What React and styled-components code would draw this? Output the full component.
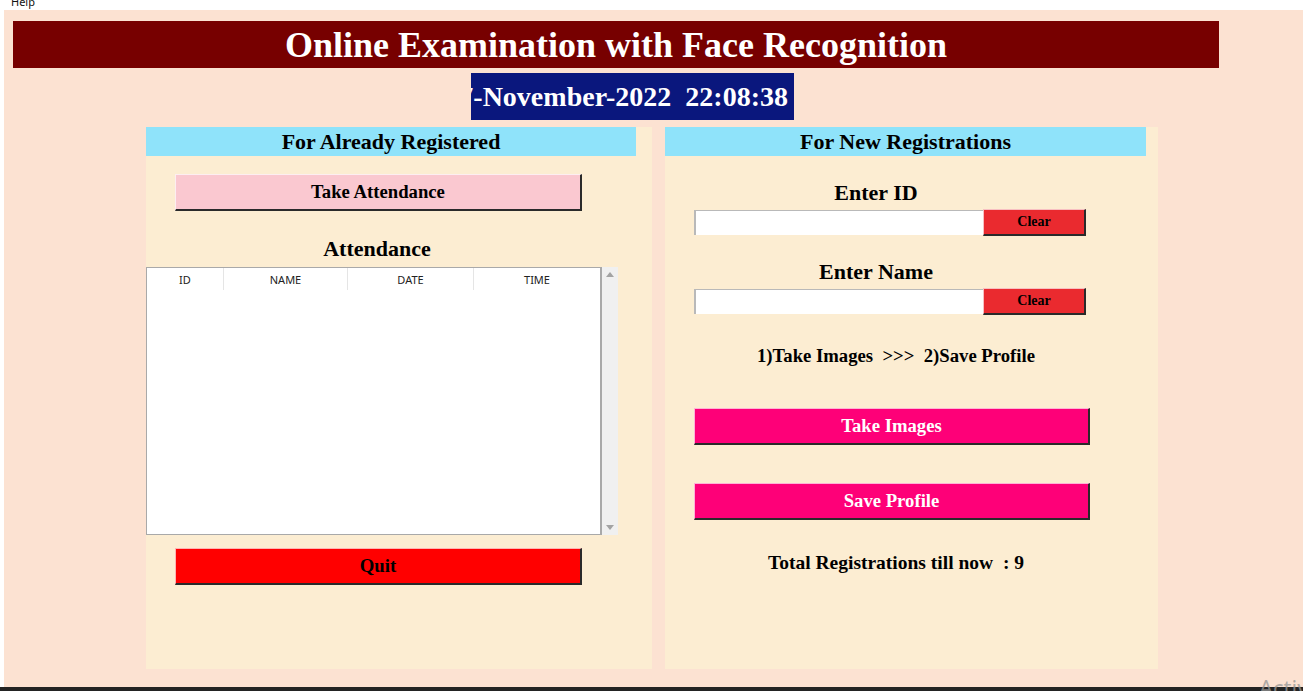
import React from "react";
import styled, { createGlobalStyle } from "styled-components";

const Global = createGlobalStyle`
  html, body { margin: 0; padding: 0; }
  body { background: #ffffff; width: 1303px; height: 691px; overflow: hidden; }
  #root { width: 1303px; height: 691px; }
`;

const serif = `"Liberation Serif", "Times New Roman", serif`;
const sans = `"Noto Sans", "Open Sans", sans-serif`;

const Screen = styled.div`
  position: relative;
  width: 1303px;
  height: 691px;
  display: flex;
  flex-direction: column;
  overflow: hidden;
`;

const MenuBar = styled.div`
  height: 10px;
  background: #ffffff;
  overflow: hidden;
  display: flex;
  padding-left: 11px;
`;

const MenuItem = styled.span`
  font-family: ${sans};
  font-size: 11px;
  line-height: 11px;
  margin-top: -4px;
  color: #111;
`;

const Window = styled.div`
  height: 677px;
  margin-left: 4px;
  background: #fce2d2;
  display: flex;
  flex-direction: column;
`;

const BottomLine = styled.div`
  height: 4px;
  background: #232323;
`;

const TitleBar = styled.div`
  margin: 11px 0 0 9px;
  width: 1206px;
  height: 47px;
  background: #770000;
  color: #ffffff;
  font-family: ${serif};
  font-weight: bold;
  font-size: 36px;
  display: flex;
  align-items: center;
  justify-content: center;
`;

const DateBox = styled.div`
  margin: 5px 0 0 467px;
  width: 323px;
  height: 47px;
  background: #0a177d;
  color: #ffffff;
  font-family: ${serif};
  font-weight: bold;
  font-size: 28px;
  display: flex;
  align-items: center;
  justify-content: flex-end;
  padding-right: 6px;
  box-sizing: border-box;
  overflow: hidden;
  white-space: pre;
`;

const Panels = styled.div`
  display: flex;
  gap: 13px;
  margin-top: 7px;
  padding-left: 142px;
`;

const Panel = styled.div`
  width: ${(p) => p.$w}px;
  height: 542px;
  background: #fcedd2;
  display: flex;
  flex-direction: column;
`;

const PanelHeader = styled.div`
  width: ${(p) => p.$w}px;
  height: 29px;
  background: #8fe3fa;
  font-family: ${serif};
  font-weight: bold;
  font-size: 22px;
  color: #000;
  display: flex;
  align-items: center;
  justify-content: center;
`;

const RaisedButton = styled.button`
  box-sizing: border-box;
  width: ${(p) => p.$w}px;
  height: ${(p) => p.$h || 37}px;
  margin: ${(p) => p.$mt}px 0 0 ${(p) => (p.$ml === undefined ? 29 : p.$ml)}px;
  padding: 0;
  background: ${(p) => p.$bg};
  color: ${(p) => p.$fg || "#000"};
  font-family: ${serif};
  font-weight: bold;
  font-size: ${(p) => p.$fs || 18.7}px;
  border-style: solid;
  border-width: 1px 2px 2px 1px;
  border-color: rgba(255,255,255,0.7) #2a2a2a #2a2a2a rgba(255,255,255,0.7);
  display: flex;
  align-items: center;
  justify-content: center;
  cursor: pointer;
`;

const SectionLabel = styled.div`
  width: ${(p) => p.$w}px;
  margin-top: ${(p) => p.$mt}px;
  text-align: center;
  font-family: ${serif};
  font-weight: bold;
  font-size: ${(p) => p.$fs || 22}px;
  line-height: 24px;
  color: #000;
  white-space: pre;
`;

const TableArea = styled.div`
  display: flex;
  margin-top: 6px;
  height: 268px;
`;

const Table = styled.div`
  box-sizing: border-box;
  width: 456px;
  height: 268px;
  background: #ffffff;
  border: 1px solid #a9a9a9;
  border-right-width: 2px;
`;

const HeaderRow = styled.div`
  display: grid;
  grid-template-columns: 77px 124px 126px 1fr;
  height: 22px;
`;

const HeaderCell = styled.div`
  font-family: ${sans};
  font-size: 11px;
  color: #222;
  display: flex;
  align-items: center;
  justify-content: center;
  border-right: 1px solid #e5e5e5;
  &:last-child { border-right: none; }
`;

const Scrollbar = styled.div`
  width: 16px;
  height: 268px;
  background: #f0f0f0;
  display: flex;
  flex-direction: column;
  justify-content: space-between;
  align-items: center;
  padding: 5px 0;
  box-sizing: border-box;
`;

const FieldRow = styled.div`
  display: flex;
  align-items: center;
  margin: ${(p) => p.$mt}px 0 0 29px;
  height: 27px;
`;

const TextInput = styled.input`
  box-sizing: border-box;
  width: 289px;
  height: 25px;
  border: none;
  border-top: 1px solid #b9b9b9;
  border-left: 2px solid #b9b9b9;
  background: #ffffff;
  outline: none;
  padding: 0 4px;
`;

const Watermark = styled.div`
  position: absolute;
  left: 1259px;
  top: 674px;
  font-family: ${sans};
  font-size: 22px;
  color: rgba(150,150,150,0.75);
  line-height: 26px;
`;

const Arrow = ({ up }) => (
  <svg width="8" height="5" viewBox="0 0 8 5">
    <polygon points={up ? "0,5 8,5 4,0" : "0,0 8,0 4,5"} fill="#a3a3a3" />
  </svg>
);

export default function App() {
  return (
    <Screen>
      <Global />
      <MenuBar>
        <MenuItem>Help</MenuItem>
      </MenuBar>
      <Window>
        <TitleBar>Online Examination with Face Recognition</TitleBar>
        <DateBox>{"17-November-2022  22:08:38"}</DateBox>
        <Panels>
          <Panel $w={506}>
            <PanelHeader $w={490}>For Already Registered</PanelHeader>
            <RaisedButton $w={407} $mt={18} $bg="#fac8d0">Take Attendance</RaisedButton>
            <SectionLabel $w={462} $mt={26}>Attendance</SectionLabel>
            <TableArea>
              <Table>
                <HeaderRow>
                  <HeaderCell>ID</HeaderCell>
                  <HeaderCell>NAME</HeaderCell>
                  <HeaderCell>DATE</HeaderCell>
                  <HeaderCell>TIME</HeaderCell>
                </HeaderRow>
              </Table>
              <Scrollbar>
                <Arrow up />
                <Arrow />
              </Scrollbar>
            </TableArea>
            <RaisedButton $w={407} $mt={13} $bg="#ff0000">Quit</RaisedButton>
          </Panel>
          <Panel $w={493}>
            <PanelHeader $w={481}>For New Registrations</PanelHeader>
            <SectionLabel $w={422} $mt={25}>Enter ID</SectionLabel>
            <FieldRow $mt={4}>
              <TextInput />
              <RaisedButton $w={103} $h={27} $mt={0} $ml={0} $bg="#ea2a2f" $fs={14}>Clear</RaisedButton>
            </FieldRow>
            <SectionLabel $w={422} $mt={24}>Enter Name</SectionLabel>
            <FieldRow $mt={4}>
              <TextInput />
              <RaisedButton $w={103} $h={27} $mt={0} $ml={0} $bg="#ea2a2f" $fs={14}>Clear</RaisedButton>
            </FieldRow>
            <SectionLabel $w={462} $mt={29} $fs={18.7}>{"1)Take Images  >>>  2)Save Profile"}</SectionLabel>
            <RaisedButton $w={396} $mt={40} $bg="#fe0078" $fg="#ffffff">Take Images</RaisedButton>
            <RaisedButton $w={396} $mt={38} $bg="#fe0078" $fg="#ffffff">Save Profile</RaisedButton>
            <SectionLabel $w={462} $mt={31} $fs={19.5}>{"Total Registrations till now  : 9"}</SectionLabel>
          </Panel>
        </Panels>
      </Window>
      <BottomLine />
      <Watermark>Activate Windows</Watermark>
    </Screen>
  );
}
